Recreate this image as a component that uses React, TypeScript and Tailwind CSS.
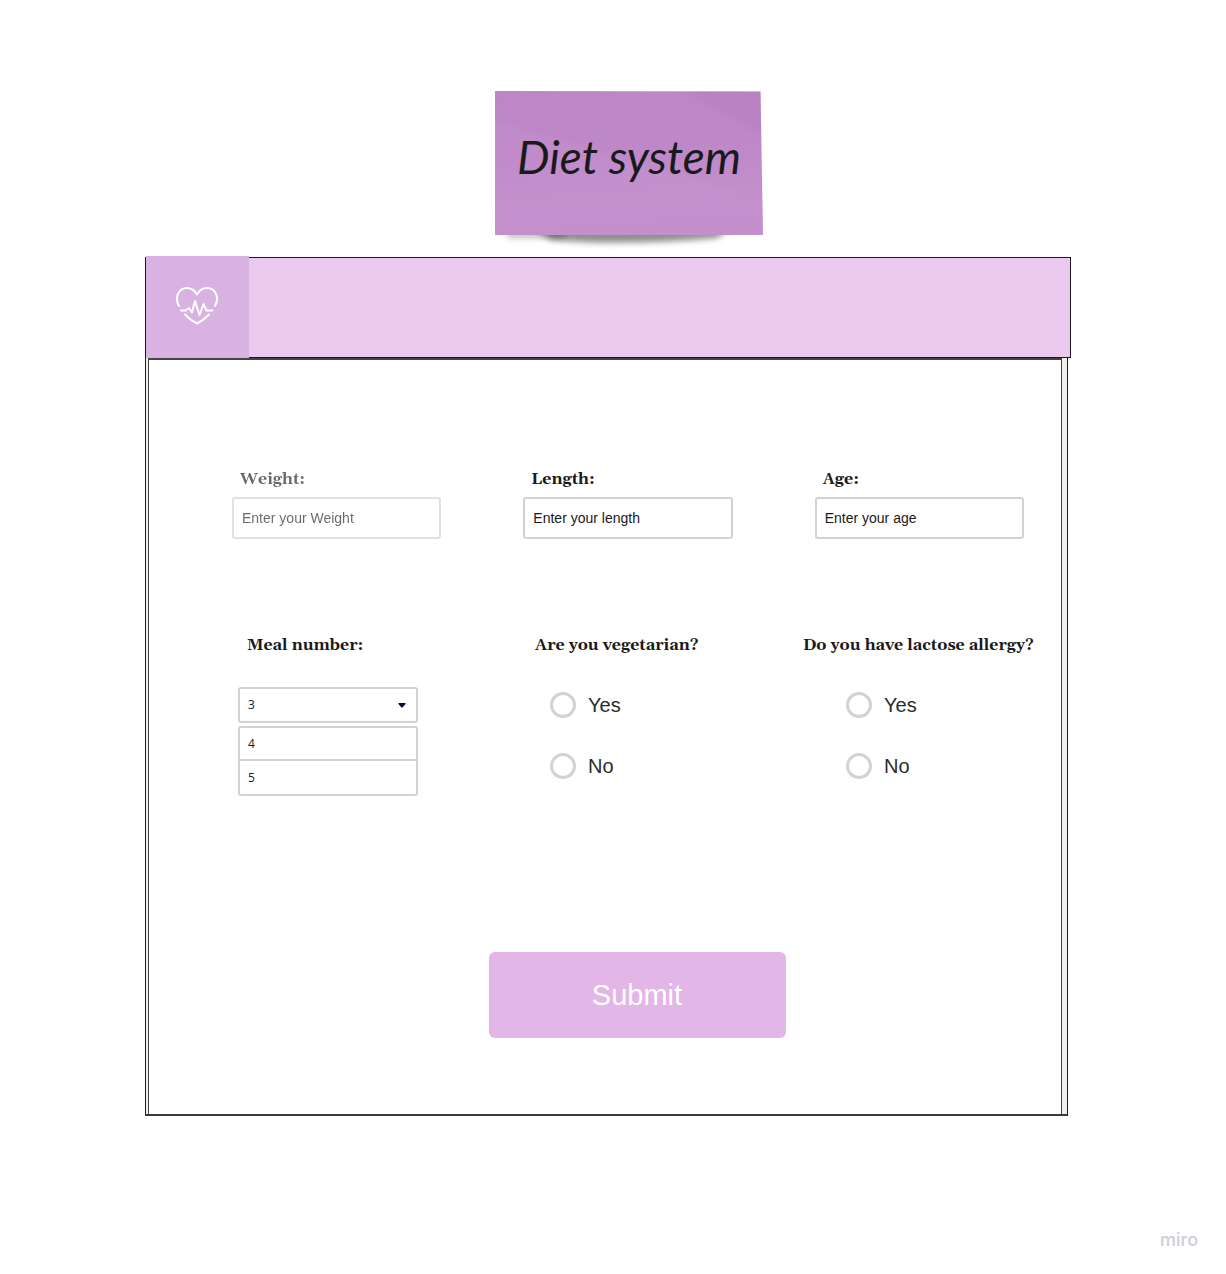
import { useState } from "react";

function StickyNote() {
  return (
    <div className="relative flex h-36 w-[268px] items-center justify-center">
      <svg
        aria-hidden="true"
        className="absolute top-0 left-0 overflow-visible"
        width="268"
        height="160"
        viewBox="0 0 268 160"
      >
        <defs>
          <linearGradient id="paper" x1="0.4" y1="0" x2="0.55" y2="1">
            <stop offset="0" stopColor="#bd86c7" />
            <stop offset="0.5" stopColor="#bf89c9" />
            <stop offset="0.75" stopColor="#c28fcb" />
            <stop offset="1" stopColor="#c18ccb" />
          </linearGradient>
          <filter id="soft" x="-20%" y="-100%" width="140%" height="300%">
            <feGaussianBlur stdDeviation="3" />
          </filter>
          <clipPath id="sheet">
            <path d="M0 0L265.500 0.500L268 144H0Z" />
          </clipPath>
        </defs>
        <path d="M12 138H70V147H12Z" fill="#000" opacity="0.25" filter="url(#soft)" />
        <path d="M40 138H235L222 147Q130 155 56 149Z" fill="#000" opacity="0.45" filter="url(#soft)" />
        <path d="M0 0L265.500 0.500L268 144H0Z" fill="url(#paper)" />
        <g clipPath="url(#sheet)">
          <path d="M-20 24Q90 55 290 115V170H-20Z" fill="#cc9bd4" opacity="0.2" filter="url(#soft)" />
          <path d="M180 -10H290V50Q235 34 180 -10Z" fill="#b07abb" opacity="0.35" filter="url(#soft)" />
        </g>
      </svg>
      <h1 className="relative pb-3 font-['Segoe_Print','Bradley_Hand','Lato',cursive] text-[46px] leading-none whitespace-nowrap italic text-[#1a1a1a]">
        Diet system
      </h1>
    </div>
  );
}

function HeartPulse() {
  return (
    <svg
      aria-hidden="true"
      width="44"
      height="40"
      viewBox="0 0 44 40"
      fill="none"
      stroke="#fff"
      strokeWidth="2"
      strokeLinecap="round"
      strokeLinejoin="round"
    >
      <path d="M4 20C-1 11 4 2 12 2C17 2 20 5 22 8.500C24 5 27 2 32 2C40 2 45 11 40 20" />
      <path d="M6 24.500H10.500L14 22L17 26.500L20 15L24.500 29L28.500 18L31.500 24.500H37.500" />
      <path d="M10 28.500Q15 34 22 37.500Q29 34 34 28.500" />
    </svg>
  );
}

type FieldProps = { id: string; label: string; placeholder: string; faded?: boolean };

function Field({ id, label, placeholder, faded }: FieldProps) {
  return (
    <div className={faded ? "opacity-65" : ""}>
      <label
        htmlFor={id}
        className="block pl-2 font-['Gelasio','Liberation_Serif',serif] text-base leading-5 font-bold text-[#1a1a1a]"
      >
        {label}
      </label>
      <input
        id={id}
        type="text"
        placeholder={placeholder}
        className="mt-2 h-[42px] w-full rounded-[3px] border-2 border-[#d2d2d2] bg-white px-2 text-sm text-[#1a1a1a] placeholder:text-[#1a1a1a]"
      />
    </div>
  );
}

function Question({ name, text, indent }: { name: string; text: string; indent: string }) {
  return (
    <fieldset>
      <legend className="font-['Gelasio','Liberation_Serif',serif] text-base leading-5 font-bold whitespace-nowrap text-[#1a1a1a]">
        {text}
      </legend>
      <div className={`flex flex-col gap-[35px] pt-[37px] ${indent}`}>
        {["Yes", "No"].map((answer) => (
          <label key={answer} className="flex items-center gap-3 text-xl leading-[25px] text-[#2b2b2b]">
            <input
              type="radio"
              name={name}
              value={answer}
              className="size-[26px] appearance-none rounded-full border-[3px] border-[#d2d2d2] bg-white checked:bg-[#e2b6e6]"
            />
            {answer}
          </label>
        ))}
      </div>
    </fieldset>
  );
}

function MealNumber() {
  const [meals, setMeals] = useState("3");
  return (
    <div className="w-[180px]">
      <label
        htmlFor="meals"
        className="block pl-[9px] font-['Gelasio','Liberation_Serif',serif] text-base leading-5 font-bold text-[#1a1a1a]"
      >
        Meal number:
      </label>
      <div className="relative mt-8 font-['Open_Sans',sans-serif] text-xs">
        <select
          id="meals"
          value={meals}
          onChange={(e) => setMeals(e.target.value)}
          className="block h-9 w-full appearance-none rounded-[3px] border-2 border-[#d2d2d2] bg-white px-2 text-[#1a1a1a]"
        >
          <option>3</option>
          <option>4</option>
          <option>5</option>
        </select>
        <svg aria-hidden="true" className="pointer-events-none absolute top-4 right-3" width="8" height="5" viewBox="0 0 8 5">
          <path d="M1 0H7Q8 0 7.500 1L5 4Q4 5 3 4L0.500 1Q0 0 1 0Z" fill="#0d0638" />
        </svg>
      </div>
      <div className="mt-[3px] divide-y-2 divide-[#d2d2d2] rounded-[3px] border-2 border-[#d2d2d2] font-['Open_Sans',sans-serif] text-xs text-[#1a1a1a]">
        {["4", "5"].map((n) => (
          <button key={n} type="button" onClick={() => setMeals(n)} className="block h-[33px] w-full px-2 text-left">
            {n}
          </button>
        ))}
      </div>
    </div>
  );
}

export default function App() {
  return (
    <div className="min-h-screen bg-white pt-[91px] font-['Liberation_Sans',Arial,sans-serif]">
      <div className="flex justify-center pl-8">
        <StickyNote />
      </div>

      <main className="mt-[22px] mr-[155px] ml-[145px]">
        <header className="flex h-[101px] border border-[#1a1a1a] bg-[#ebc8ee]">
          <div className="-mt-0.5 flex h-[102px] w-[103px] items-center justify-center bg-[#d8b2e0] pr-0.5 pb-0.5">
            <HeartPulse />
          </div>
        </header>

        <div className="mr-[3px] border-x border-b-2 border-[#1a1a1a] border-b-[#3a3a3a] bg-[#f0f0f0]">
          <form
            className="mr-[5px] ml-0.5 border-x border-t-2 border-[#444] bg-white pt-[109px] pb-[76px]"
            onSubmit={(e) => e.preventDefault()}
          >
            <div className="grid grid-cols-3 gap-[82px] pr-[37px] pl-[83px]">
              <Field id="weight" label="Weight:" placeholder="Enter your Weight" faded />
              <Field id="length" label="Length:" placeholder="Enter your length" />
              <Field id="age" label="Age:" placeholder="Enter your age" />
            </div>

            <div className="mt-24 grid grid-cols-[297fr_268fr_258fr] pl-[89px]">
              <MealNumber />
              <Question name="vegetarian" text="Are you vegetarian?" indent="pl-[15px]" />
              <Question name="lactose" text="Do you have lactose allergy?" indent="pl-[43px]" />
            </div>

            <div className="mt-[156px] flex justify-center pl-16">
              <button
                type="submit"
                className="h-[86px] w-[297px] rounded-md bg-[#e2b6e6] text-[29px] leading-none text-white"
              >
                Submit
              </button>
            </div>
          </form>
        </div>
      </main>

      <footer className="mt-28 flex justify-end pr-7">
        <span className="font-['Inter',sans-serif] text-lg leading-6 font-medium text-[#cdcdd8]">miro</span>
      </footer>
    </div>
  );
}
